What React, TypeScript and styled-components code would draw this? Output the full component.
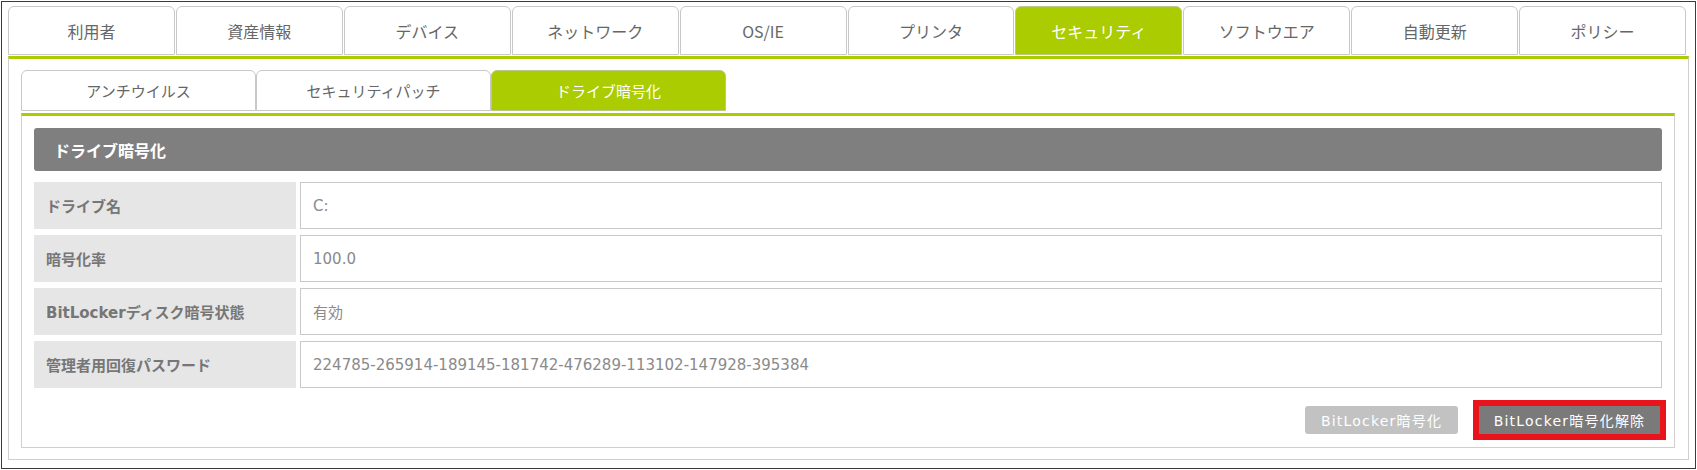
import React from "react";
import styled, { createGlobalStyle } from "styled-components";

const GREEN = "#aacc00";

const Global = createGlobalStyle`
  html, body { margin: 0; padding: 0; background: #fff; }
  body { font-family: "DejaVu Sans", "Noto Sans CJK JP", sans-serif; }
  * { box-sizing: border-box; }
`;

const Frame = styled.div`
  margin: 1px;
  width: 1695px;
  border: 1px solid #3a3a3a;
  padding: 4px 6px 8px 6px;
  background: #fff;
`;

const TabBar = styled.div`
  display: flex;
  gap: 1px;
  height: 49px;
  margin-right: 3px;
  margin-bottom: 1px;
`;

const Tab = styled.div<{ $active?: boolean }>`
  flex: 1;
  display: flex;
  align-items: center;
  justify-content: center;
  border: 1px solid ${(p) => (p.$active ? "#b8c98a" : "#c8c8c8")};
  border-radius: 6px 6px 0 0;
  background: ${(p) => (p.$active ? GREEN : "#fff")};
  color: ${(p) => (p.$active ? "#fff" : "#666")};
  font-size: 16px;
  font-family: "Noto Sans CJK JP", sans-serif;
`;

const Panel = styled.div`
  border: 1px solid #cfcfcf;
  border-top: 3px solid ${GREEN};
  padding: 11px 13px 11px 12px;
`;

const SubTabBar = styled.div`
  display: flex;
  height: 41px;
  margin-bottom: 2px;
`;

const SubTab = styled.div<{ $active?: boolean }>`
  width: 235px;
  display: flex;
  align-items: center;
  justify-content: center;
  border: 1px solid ${(p) => (p.$active ? "#b8c98a" : "#c8c8c8")};
  border-radius: 6px 6px 0 0;
  background: ${(p) => (p.$active ? GREEN : "#fff")};
  color: ${(p) => (p.$active ? "#fff" : "#666")};
  font-size: 15px;
  font-family: "Noto Sans CJK JP", sans-serif;
`;

const SubPanel = styled.div`
  border: 1px solid #cfcfcf;
  border-top: 3px solid ${GREEN};
  padding: 12px 12px 13px 12px;
`;

const Header = styled.div`
  height: 43px;
  background: #7f7f7f;
  border-radius: 3px;
  display: flex;
  align-items: center;
  padding-left: 20px;
  color: #fff;
  font-weight: bold;
  font-size: 16px;
  font-family: "Noto Sans CJK JP", sans-serif;
`;

const Rows = styled.div`
  margin-top: 11px;
  display: flex;
  flex-direction: column;
  gap: 6px;
`;

const Row = styled.div`
  display: flex;
  gap: 4px;
  height: 47px;
`;

const Label = styled.div`
  width: 262px;
  background: #e6e6e6;
  display: flex;
  align-items: center;
  padding-left: 12px;
  color: #767676;
  font-weight: bold;
  font-size: 15px;
`;

const Value = styled.div`
  flex: 1;
  border: 1px solid #c9c9c9;
  background: #fff;
  display: flex;
  align-items: center;
  padding-left: 12px;
  color: #8a8a8a;
  font-size: 15px;
`;

const ButtonRow = styled.div`
  margin-top: 18px;
  display: flex;
  justify-content: flex-end;
  gap: 21px;
  padding-right: 2px;
`;

const Button = styled.button<{ $variant: "light" | "dark" }>`
  height: 28px;
  border: none;
  border-radius: ${(p) => (p.$variant === "light" ? "3px" : "0")};
  background: ${(p) => (p.$variant === "light" ? "#c2c2c2" : "#7a7a7a")};
  color: #fff;
  font-family: "DejaVu Sans", "Noto Sans CJK JP", sans-serif;
  font-size: 14px;
  letter-spacing: 1.2px;
  padding: 0;
  width: ${(p) => (p.$variant === "light" ? "153px" : "181px")};
  outline: ${(p) => (p.$variant === "dark" ? "6px solid #e8131b" : "none")};
  cursor: pointer;
`;

const tabs = [
  "利用者",
  "資産情報",
  "デバイス",
  "ネットワーク",
  "OS/IE",
  "プリンタ",
  "セキュリティ",
  "ソフトウエア",
  "自動更新",
  "ポリシー",
];

const subTabs = ["アンチウイルス", "セキュリティパッチ", "ドライブ暗号化"];

const rows: [string, string][] = [
  ["ドライブ名", "C:"],
  ["暗号化率", "100.0"],
  ["BitLockerディスク暗号状態", "有効"],
  ["管理者用回復パスワード", "224785-265914-189145-181742-476289-113102-147928-395384"],
];

export default function App() {
  return (
    <>
      <Global />
      <Frame>
        <TabBar>
          {tabs.map((t) => (
            <Tab key={t} $active={t === "セキュリティ"}>
              {t}
            </Tab>
          ))}
        </TabBar>
        <Panel>
          <SubTabBar>
            {subTabs.map((t) => (
              <SubTab key={t} $active={t === "ドライブ暗号化"}>
                {t}
              </SubTab>
            ))}
          </SubTabBar>
          <SubPanel>
            <Header>ドライブ暗号化</Header>
            <Rows>
              {rows.map(([l, v]) => (
                <Row key={l}>
                  <Label>{l}</Label>
                  <Value>{v}</Value>
                </Row>
              ))}
            </Rows>
            <ButtonRow>
              <Button $variant="light">BitLocker暗号化</Button>
              <Button $variant="dark">BitLocker暗号化解除</Button>
            </ButtonRow>
          </SubPanel>
        </Panel>
      </Frame>
    </>
  );
}
